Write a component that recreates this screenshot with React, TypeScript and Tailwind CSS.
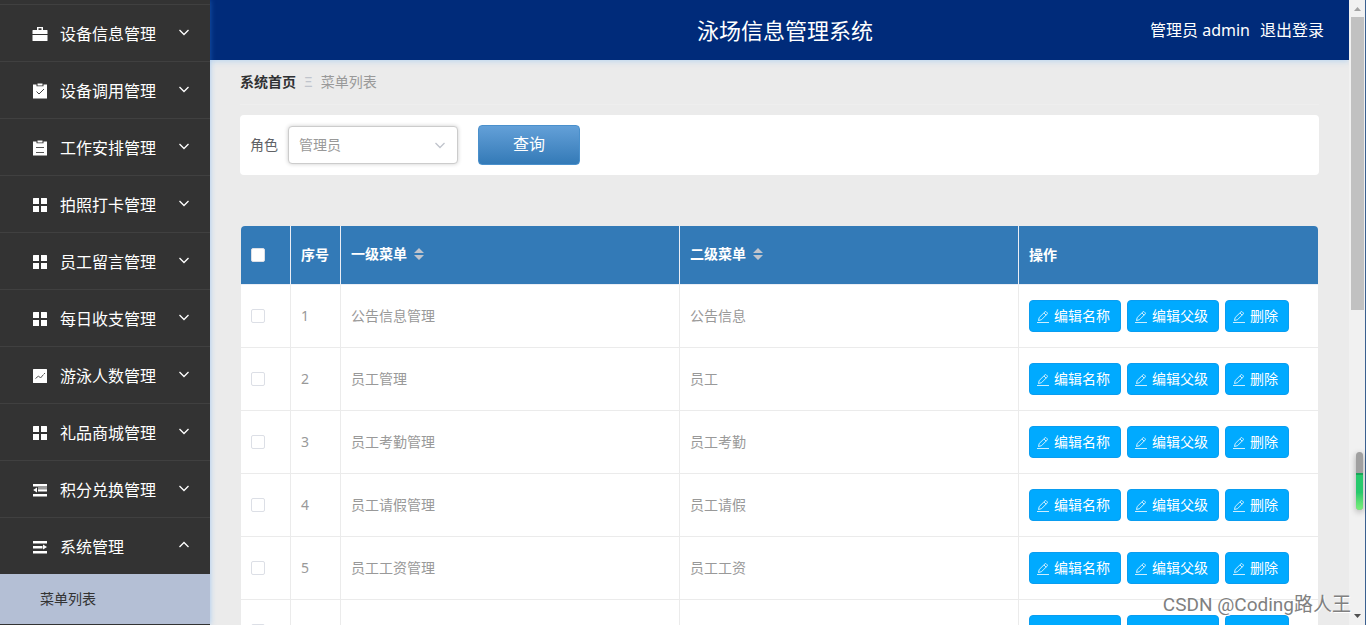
import React, { useState } from 'react';

const menuItems = [
  { title: '设备信息管理', icon: 'briefcase' },
  { title: '设备调用管理', icon: 'claim' },
  { title: '工作安排管理', icon: 'order' },
  { title: '拍照打卡管理', icon: 'grid' },
  { title: '员工留言管理', icon: 'grid' },
  { title: '每日收支管理', icon: 'grid' },
  { title: '游泳人数管理', icon: 'chart' },
  { title: '礼品商城管理', icon: 'grid' },
  { title: '积分兑换管理', icon: 'fold' },
  { title: '系统管理', icon: 'unfold', open: true },
];

const rows = [
  { id: 1, parent: '公告信息管理', child: '公告信息' },
  { id: 2, parent: '员工管理', child: '员工' },
  { id: 3, parent: '员工考勤管理', child: '员工考勤' },
  { id: 4, parent: '员工请假管理', child: '员工请假' },
  { id: 5, parent: '员工工资管理', child: '员工工资' },
];

function MenuIcon({ name }: { name: string }) {
  return (
    <svg viewBox="0 0 16 16" className="h-4 w-4 shrink-0" fill="#fff" aria-hidden="true">
      {name === 'briefcase' && (
        <path
          fillRule="evenodd"
          d="M5 1h6v3h4a.5.5 0 0 1 .5.5V8H.5V4.500A.5.5 0 0 1 1 4h4zM6.500 2.300V4h3V2.300zM.5 9h15v5.500a.5.5 0 0 1-.5.5H1a.5.5 0 0 1-.5-.5z"
        />
      )}
      {name === 'claim' && (
        <>
          <path d="M1 1.500h3.500v1.700h7V1.500H15v14H1zM5.500.5h5v2h-5z" />
          <path d="M4.500 8.500l2.500 2.500 5-5" fill="none" stroke="#444" />
        </>
      )}
      {name === 'order' && (
        <>
          <path d="M1 1.500h3.500v1.700h7V1.500H15v14H1zM5.500.5h5v2h-5z" />
          <path d="M4 7.500h8M4 12.500h8" fill="none" stroke="#555" />
        </>
      )}
      {name === 'grid' && (
        <path d="M1.500 1H7v6H1V1.500zM9 1h5.500l.5.5V7H9zM1 9h6v6H1zM9 9h6v6H9z" />
      )}
      {name === 'chart' && (
        <>
          <rect x="1" y="1" width="14" height="14" rx=".5" />
          <path d="M3.500 10.500l3-2.500 2 2 3-3.500M12 5.500h1" fill="none" stroke="#555" />
        </>
      )}
      {name === 'fold' && (
        <path d="M1 2h14v2.500H1zM6 5.500h9v1H6zM6 7.200h9v2.300H6zM1 12h14v2.500H1zM5 5.500v5L1.200 8z" />
      )}
      {name === 'unfold' && (
        <path d="M1 2h14v2.500H1zM1 7h9.500v2.500H1zM1 12h14v2.500H1zM11 5.500v5L15 8z" />
      )}
    </svg>
  );
}

function Chevron({ up = false, className = '' }: { up?: boolean; className?: string }) {
  return (
    <svg viewBox="0 0 12 12" className={`h-3 w-3 ${className}`} fill="none" stroke="currentColor" strokeWidth="1.3" aria-hidden="true">
      <path d={up ? 'M1.500 8L6 3.500 10.500 8' : 'M1.500 4L6 8.500 10.500 4'} />
    </svg>
  );
}

function SortIcon() {
  return (
    <svg viewBox="0 0 10 12" className="h-3 w-[10px]" fill="#c0c4cc" aria-hidden="true">
      <path d="M5 0l5 5H0zM0 7h10l-5 5z" />
    </svg>
  );
}

function ActionButton({ label, className = 'w-[92px]' }: { label?: string; className?: string }) {
  return (
    <button
      type="button"
      className={`flex h-8 items-center gap-[5px] rounded border border-[#0a9df0] bg-[#00aaff] pl-[7px] text-sm text-white ${className}`}
    >
      {label && (
        <svg viewBox="0 0 12 12" className="mt-px h-3 w-3" fill="none" stroke="#fff" strokeWidth=".8" aria-hidden="true">
          <path d="M0 11.500h12M1.500 9.500l.7-3L8 .8q.6-.5 1.200 0l1 1q.5.6 0 1.200L4.500 8.700zM7 2l2.200 2.200" />
        </svg>
      )}
      {label}
    </button>
  );
}

function Sidebar() {
  return (
    <nav className="z-10 w-[210px] shrink-0 overflow-hidden bg-[#333] pt-1 shadow-[0_0_6px_rgba(64,158,255,0.4)]">
      <ul>
        {menuItems.map((item) => (
          <li key={item.title}>
            <button
              type="button"
              aria-expanded={!!item.open}
              className="flex h-[57px] w-full items-center border-t border-[#404040] pl-8 pr-5 pt-[2px] text-base text-white"
            >
              <MenuIcon name={item.icon} />
              <span className="ml-3 flex-1 text-left">{item.title}</span>
              <Chevron up={item.open} className="mb-1" />
            </button>
          </li>
        ))}
        <li>
          <a href="#menu" className="flex h-[50px] items-center bg-[#b4bfd5] pl-10 text-sm text-[#333]">
            菜单列表
          </a>
        </li>
      </ul>
    </nav>
  );
}

function Header() {
  return (
    <header className="grid h-[60px] shrink-0 grid-cols-[1fr_auto_1fr] items-center bg-[#002b7a] pl-9 pr-[25px] text-base text-white shadow-[0_1px_6px_rgba(64,158,255,0.3)]">
      <h1 className="col-start-2 text-[22px]">泳场信息管理系统</h1>
      <div className="flex justify-end gap-[10px]">
        <span>管理员 admin</span>
        <a href="#logout">退出登录</a>
      </div>
    </header>
  );
}

function FilterBar() {
  const [role, setRole] = useState('管理员');

  return (
    <form className="mt-[10px] flex h-[60px] items-center rounded bg-white px-[10px] text-sm">
      <label htmlFor="role" className="text-[#606266]">角色</label>
      <div className="relative ml-[10px]">
        <select
          id="role"
          value={role}
          onChange={(e) => setRole(e.target.value)}
          className="h-[38px] w-[170px] appearance-none rounded border border-[#ccc] bg-white pl-[10px] text-[#999] shadow-[0_0_4px_rgba(0,0,0,0.2)]"
        >
          <option>管理员</option>
          <option>员工</option>
        </select>
        <Chevron className="pointer-events-none absolute right-3 top-[13px] text-[#c0c4cc]" />
      </div>
      <button
        type="button"
        className="ml-5 h-10 w-[102px] rounded border border-[#4a90cc] bg-linear-to-b from-[#63a0d8] to-[#337ab7] pb-[2px] text-base text-white"
      >
        查询
      </button>
    </form>
  );
}

function MenuTable() {
  const [selected, setSelected] = useState<number[]>([]);

  const toggle = (id: number) => {
    setSelected(selected.includes(id) ? selected.filter((s) => s !== id) : [...selected, id]);
  };

  const boxClass =
    'block h-[14px] w-[14px] appearance-none rounded-[2px] border border-[#dcdfe6] bg-white checked:bg-[#00aaff]';

  return (
    <div className="mx-px mt-[51px] overflow-hidden rounded-t bg-white">
      <table className="w-full table-fixed border-separate border-spacing-0 text-left text-sm text-[#999]">
        <colgroup>
          <col className="w-[50px]" />
          <col className="w-[50px]" />
          <col />
          <col />
          <col className="w-[299px]" />
        </colgroup>
        <thead>
          <tr className="h-[59px] bg-[#337ab7] text-white *:border-b *:border-[#ebeef5] *:px-[10px]">
            <th className="border-r">
              <input
                type="checkbox"
                aria-label="全选"
                className={boxClass}
                checked={selected.length === rows.length}
                onChange={() => setSelected(selected.length === rows.length ? [] : rows.map((r) => r.id))}
              />
            </th>
            <th className="border-r">序号</th>
            <th className="border-r">
              <span className="flex items-center gap-[7px] pb-[2px]">一级菜单<SortIcon /></span>
            </th>
            <th className="border-r">
              <span className="flex items-center gap-[7px] pb-[2px]">二级菜单<SortIcon /></span>
            </th>
            <th>操作</th>
          </tr>
        </thead>
        <tbody>
          {rows.map((row) => (
            <tr key={row.id} className="h-[63px] *:border-b *:border-[#ebebeb] *:px-[10px]">
              <td className="border-r">
                <input
                  type="checkbox"
                  aria-label={`选择 ${row.id}`}
                  className={boxClass}
                  checked={selected.includes(row.id)}
                  onChange={() => toggle(row.id)}
                />
              </td>
              <td className="border-r">{row.id}</td>
              <td className="border-r">{row.parent}</td>
              <td className="border-r">{row.child}</td>
              <td>
                <div className="flex gap-[6px]">
                  <ActionButton label="编辑名称" />
                  <ActionButton label="编辑父级" />
                  <ActionButton label="删除" className="w-16" />
                </div>
              </td>
            </tr>
          ))}
          {/* empty row at the bottom edge */}
          <tr className="h-[63px] *:border-b *:border-[#ebebeb] *:px-[10px]">
            <td className="border-r">
              <input type="checkbox" aria-label="选择" className={boxClass} />
            </td>
            <td className="border-r" />
            <td className="border-r" />
            <td className="border-r" />
            <td>
              <div className="flex gap-[6px]">
                <ActionButton />
                <ActionButton />
                <ActionButton className="w-16" />
              </div>
            </td>
          </tr>
        </tbody>
      </table>
    </div>
  );
}

function ScrollTrack() {
  return (
    <div className="flex w-[17px] shrink-0 flex-col items-center justify-between border-r border-[#3a6090] bg-[#f1f1f1]" aria-hidden="true">
      <div className="flex h-1/2 w-full flex-col items-center">
        <svg viewBox="0 0 17 17" className="h-[17px] w-[17px] shrink-0" fill="#a3a3a3">
          <path d="M5 11l3.500-4 3.500 4z" />
        </svg>
        <div className="h-[293px] w-[13px] bg-[#c1c1c1]" />
      </div>
      <svg viewBox="0 0 17 17" className="h-[17px] w-[17px] shrink-0" fill="#505050">
        <path d="M5 6h7l-3.500 4z" />
      </svg>
    </div>
  );
}

export default function App() {
  return (
    <div className="relative flex h-screen overflow-hidden bg-[#333] font-['Noto_Sans','Noto_Sans_CJK_SC',sans-serif]">
      <Sidebar />
      <div className="flex min-w-0 flex-1 flex-col overflow-hidden bg-[#ebebeb]">
        <Header />
        <main className="px-[30px]">
          <nav className="flex h-[45px] items-center gap-2 border-b border-[#eee] text-sm text-[#999]" aria-label="位置">
            <a href="#home" className="font-bold text-[#303133]">系统首页</a>
            <span className="text-[#c0c4cc]">Ξ</span>
            <span>菜单列表</span>
          </nav>
          <FilterBar />
          <MenuTable />
        </main>
      </div>
      <ScrollTrack />

      <div className="absolute right-[3px] top-[452px] flex h-[58px] w-[7px] flex-col overflow-hidden rounded-full bg-[#a0a0a0] shadow-[0_2px_6px_rgba(0,0,0,0.3)]">
        <div className="mt-[21px] flex-1 border-t-2 border-[#18a558] bg-linear-to-b from-[#27c96c] from-50% to-[#7af07a]" />
      </div>
      <p className="absolute bottom-[6px] right-[15px] font-['Roboto','Noto_Sans_CJK_SC',sans-serif] text-[19px] text-[#808080] [text-shadow:1px_1px_0_#fff]">
        CSDN @Coding路人王
      </p>
    </div>
  );
}
